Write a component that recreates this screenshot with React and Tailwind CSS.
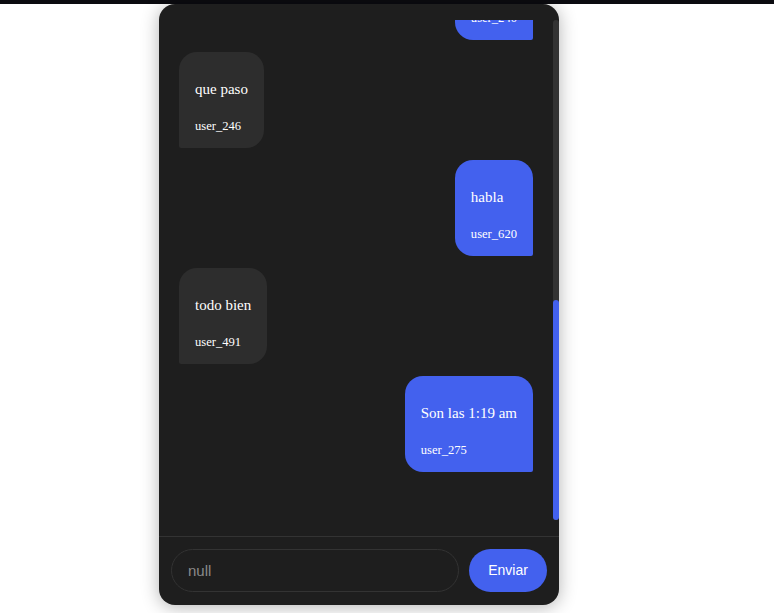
import React from "react";

const messages = [
  { text: "hola", user: "user_118", mine: false },
  { text: "hola", user: "user_532", mine: true },
  { text: "alguien?", user: "user_907", mine: false },
  { text: "aqui", user: "user_364", mine: true },
  { text: "que tal", user: "user_781", mine: false },
  { text: "bien", user: "user_240", mine: true },
  { text: "que paso", user: "user_246", mine: false },
  { text: "habla", user: "user_620", mine: true },
  { text: "todo bien", user: "user_491", mine: false },
  { text: "Son las 1:19 am", user: "user_275", mine: true },
];

export default function App() {
  return (
    <div className="min-h-[613px] bg-white">
      <div className="h-[4px] w-full bg-[#0b0b10]" />
      <div className="ml-[159px] flex h-[601px] w-[400px] flex-col overflow-hidden rounded-[16px] bg-[#1e1e1e] shadow-[0_2px_18px_rgba(0,0,0,0.3)]">
        <div className="flex min-h-0 flex-1 py-4">
          <div className="flex min-w-0 flex-1 flex-col justify-end overflow-hidden">
            <div
              className="flex shrink-0 flex-col gap-[12px] px-5 pb-[48px] pt-5"
              style={{ fontFamily: '"Liberation Serif", "Times New Roman", serif' }}
            >
              {messages.map((m, i) => (
                <div
                  key={i}
                  className={
                    m.mine
                      ? "self-end rounded-[18px] rounded-br-[2px] bg-[#4361ee] px-4 pb-[14px] pt-[28px] text-white"
                      : "self-start rounded-[18px] rounded-bl-[2px] bg-[#2d2d2d] px-4 pb-[14px] pt-[28px] text-white"
                  }
                >
                  <div className="whitespace-nowrap text-[15px] leading-[18px]">{m.text}</div>
                  <div className="mt-[21px] whitespace-nowrap text-[12.6px] leading-[15px]">{m.user}</div>
                </div>
              ))}
            </div>
          </div>
          <div className="flex w-[6px] flex-col justify-end rounded-full bg-[#333333]">
            <div className="h-[220px] rounded-full bg-[#4361ee]" />
          </div>
        </div>
        <div
          className="flex gap-[10px] border-t border-[#333333] px-3 pb-[13px] pt-3"
          style={{ fontFamily: '"Liberation Sans", Arial, sans-serif' }}
        >
          <input
            className="h-[43px] min-w-0 flex-1 rounded-full border border-[#333333] bg-[#1e1e1e] px-4 text-[15px] text-white outline-none placeholder:text-[#8a8a8a]"
            placeholder="null"
          />
          <button className="h-[43px] w-[78px] rounded-full bg-[#4361ee] text-[14px] font-medium text-white">
            Enviar
          </button>
        </div>
      </div>
    </div>
  );
}
